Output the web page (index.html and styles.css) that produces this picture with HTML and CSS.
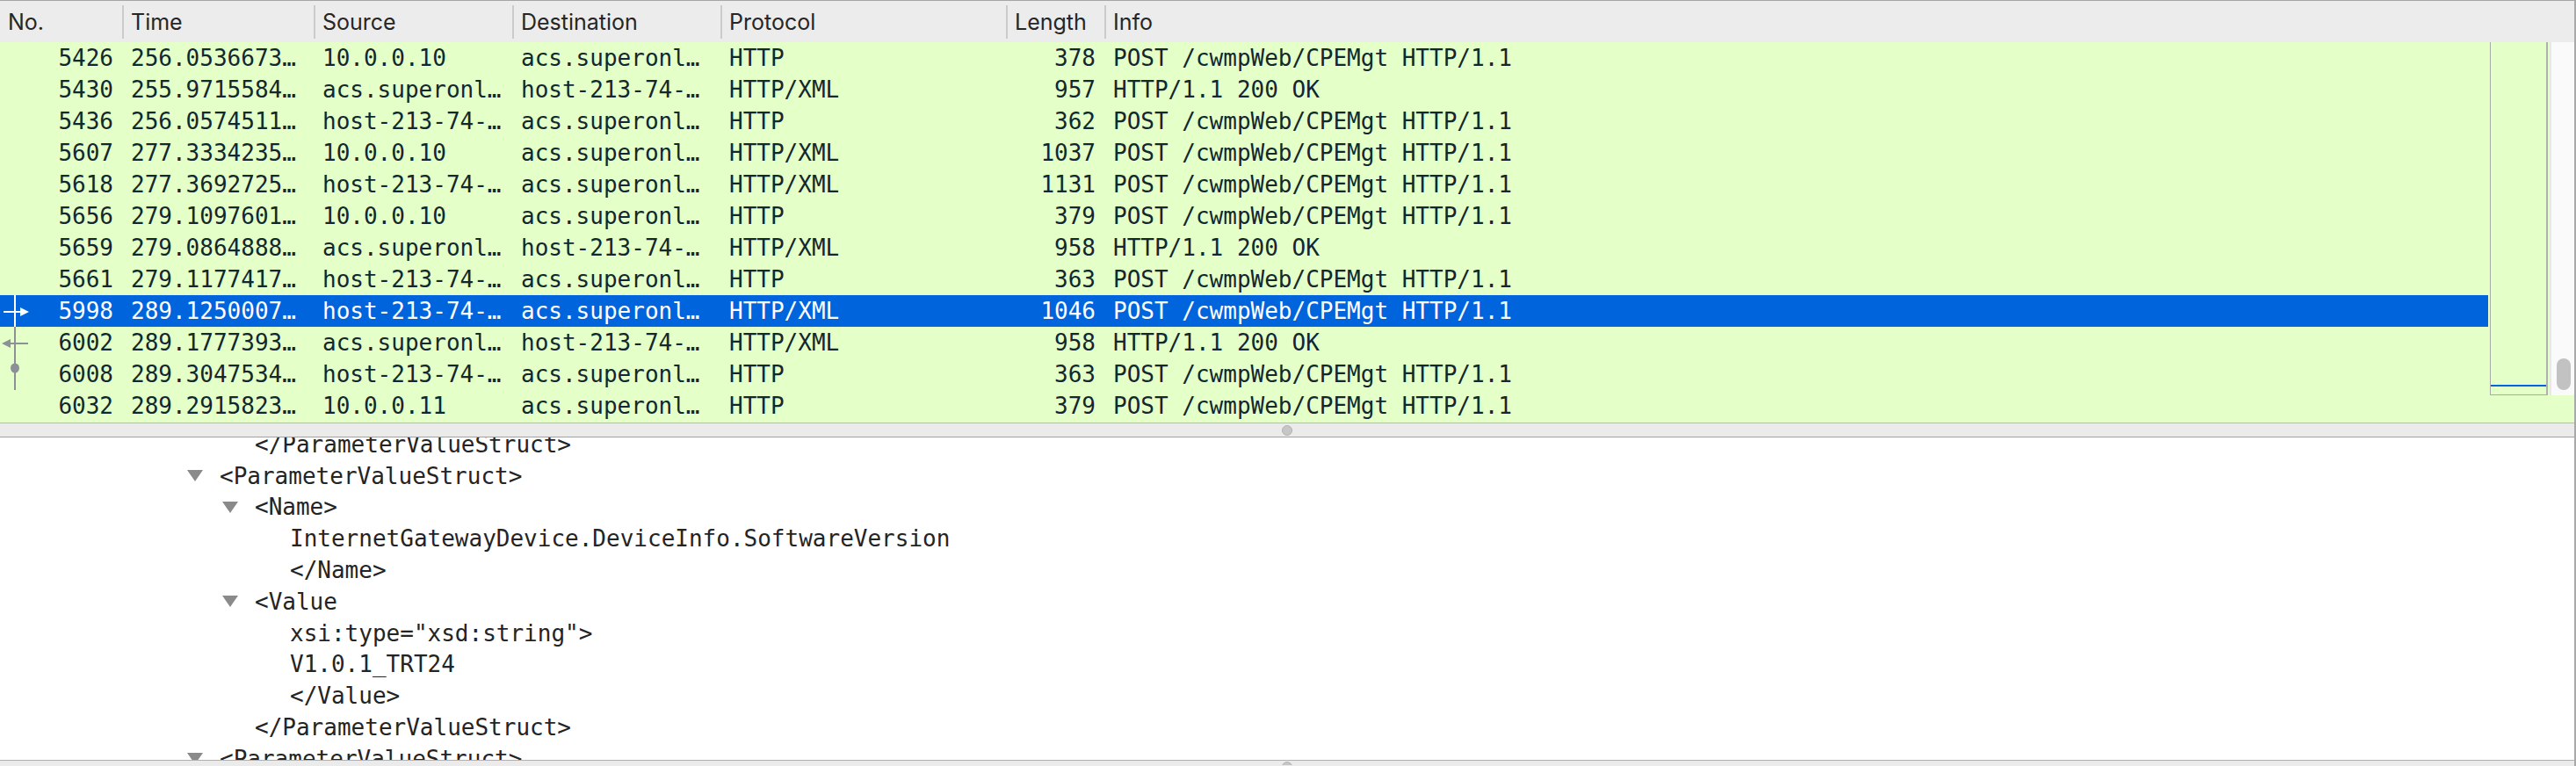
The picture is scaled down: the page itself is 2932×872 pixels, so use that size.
FILE: index.html
```html
<!DOCTYPE html>
<html>
<head>
<meta charset="utf-8">
<link rel="stylesheet" href="styles.css">
</head>
<body>
<div class="window">
  <div class="list">
    <div class="header">
      <div class="hcell first">No.</div>
      <div class="hcell">Time</div>
      <div class="hcell">Source</div>
      <div class="hcell">Destination</div>
      <div class="hcell">Protocol</div>
      <div class="hcell">Length</div>
      <div class="hcell">Info</div>
    </div>
    <div class="body">
      <div class="rows">
        <div class="row"><div class="cell no"><span class="num">5426</span></div><div class="cell">256.0536673…</div><div class="cell">10.0.0.10</div><div class="cell">acs.superonl…</div><div class="cell">HTTP</div><div class="cell len">378</div><div class="cell">POST /cwmpWeb/CPEMgt HTTP/1.1</div></div>
        <div class="row"><div class="cell no"><span class="num">5430</span></div><div class="cell">255.9715584…</div><div class="cell">acs.superonl…</div><div class="cell">host-213-74-…</div><div class="cell">HTTP/XML</div><div class="cell len">957</div><div class="cell">HTTP/1.1 200 OK</div></div>
        <div class="row"><div class="cell no"><span class="num">5436</span></div><div class="cell">256.0574511…</div><div class="cell">host-213-74-…</div><div class="cell">acs.superonl…</div><div class="cell">HTTP</div><div class="cell len">362</div><div class="cell">POST /cwmpWeb/CPEMgt HTTP/1.1</div></div>
        <div class="row"><div class="cell no"><span class="num">5607</span></div><div class="cell">277.3334235…</div><div class="cell">10.0.0.10</div><div class="cell">acs.superonl…</div><div class="cell">HTTP/XML</div><div class="cell len">1037</div><div class="cell">POST /cwmpWeb/CPEMgt HTTP/1.1</div></div>
        <div class="row"><div class="cell no"><span class="num">5618</span></div><div class="cell">277.3692725…</div><div class="cell">host-213-74-…</div><div class="cell">acs.superonl…</div><div class="cell">HTTP/XML</div><div class="cell len">1131</div><div class="cell">POST /cwmpWeb/CPEMgt HTTP/1.1</div></div>
        <div class="row"><div class="cell no"><span class="num">5656</span></div><div class="cell">279.1097601…</div><div class="cell">10.0.0.10</div><div class="cell">acs.superonl…</div><div class="cell">HTTP</div><div class="cell len">379</div><div class="cell">POST /cwmpWeb/CPEMgt HTTP/1.1</div></div>
        <div class="row"><div class="cell no"><span class="num">5659</span></div><div class="cell">279.0864888…</div><div class="cell">acs.superonl…</div><div class="cell">host-213-74-…</div><div class="cell">HTTP/XML</div><div class="cell len">958</div><div class="cell">HTTP/1.1 200 OK</div></div>
        <div class="row"><div class="cell no"><span class="num">5661</span></div><div class="cell">279.1177417…</div><div class="cell">host-213-74-…</div><div class="cell">acs.superonl…</div><div class="cell">HTTP</div><div class="cell len">363</div><div class="cell">POST /cwmpWeb/CPEMgt HTTP/1.1</div></div>
        <div class="row selected"><div class="cell no"><svg class="rel" width="40" height="36" viewBox="0 0 40 36"><line x1="17" y1="0" x2="17" y2="36" stroke="#ffffff" stroke-width="2"/><line x1="4" y1="19" x2="25" y2="19" stroke="#ffffff" stroke-width="2"/><polygon points="23,14 33,19 23,24" fill="#ffffff"/></svg><span class="num">5998</span></div><div class="cell">289.1250007…</div><div class="cell">host-213-74-…</div><div class="cell">acs.superonl…</div><div class="cell">HTTP/XML</div><div class="cell len">1046</div><div class="cell">POST /cwmpWeb/CPEMgt HTTP/1.1</div></div>
        <div class="row"><div class="cell no"><svg class="rel" width="40" height="36" viewBox="0 0 40 36"><line x1="17" y1="0" x2="17" y2="36" stroke="#8d9096" stroke-width="2"/><line x1="10" y1="19" x2="32" y2="19" stroke="#8d9096" stroke-width="2"/><polygon points="2,19 12,14 12,24" fill="#8d9096"/></svg><span class="num">6002</span></div><div class="cell">289.1777393…</div><div class="cell">acs.superonl…</div><div class="cell">host-213-74-…</div><div class="cell">HTTP/XML</div><div class="cell len">958</div><div class="cell">HTTP/1.1 200 OK</div></div>
        <div class="row"><div class="cell no"><svg class="rel" width="40" height="36" viewBox="0 0 40 36"><line x1="17" y1="0" x2="17" y2="36" stroke="#8d9096" stroke-width="2"/><ellipse cx="17" cy="11" rx="5" ry="5.5" fill="#8d9096"/></svg><span class="num">6008</span></div><div class="cell">289.3047534…</div><div class="cell">host-213-74-…</div><div class="cell">acs.superonl…</div><div class="cell">HTTP</div><div class="cell len">363</div><div class="cell">POST /cwmpWeb/CPEMgt HTTP/1.1</div></div>
        <div class="row"><div class="cell no"><span class="num">6032</span></div><div class="cell">289.2915823…</div><div class="cell">10.0.0.11</div><div class="cell">acs.superonl…</div><div class="cell">HTTP</div><div class="cell len">379</div><div class="cell">POST /cwmpWeb/CPEMgt HTTP/1.1</div></div>
      </div>
      <div class="minimap"><div class="mini-sel"></div></div>
      <div class="vscroll"><div class="thumb"></div></div>
    </div>
  </div>
  <div class="splitter"><span class="knob"></span></div>
  <div class="tree">
    <div class="tree-inner">
      <div class="tline l1"><span class="tog"></span><span>&lt;/ParameterValueStruct&gt;</span></div>
      <div class="tline l0"><span class="tog"><i class="tri"></i></span><span>&lt;ParameterValueStruct&gt;</span></div>
      <div class="tline l1"><span class="tog"><i class="tri"></i></span><span>&lt;Name&gt;</span></div>
      <div class="tline l2"><span class="tog"></span><span>InternetGatewayDevice.DeviceInfo.SoftwareVersion</span></div>
      <div class="tline l2"><span class="tog"></span><span>&lt;/Name&gt;</span></div>
      <div class="tline l1"><span class="tog"><i class="tri"></i></span><span>&lt;Value</span></div>
      <div class="tline l2"><span class="tog"></span><span>xsi:type="xsd:string"&gt;</span></div>
      <div class="tline l2"><span class="tog"></span><span>V1.0.1_TRT24</span></div>
      <div class="tline l2"><span class="tog"></span><span>&lt;/Value&gt;</span></div>
      <div class="tline l1"><span class="tog"></span><span>&lt;/ParameterValueStruct&gt;</span></div>
      <div class="tline l0"><span class="tog"><i class="tri"></i></span><span>&lt;ParameterValueStruct&gt;</span></div>
    </div>
  </div>
  <div class="splitter bottom"><span class="knob"></span></div>
</div>
</body>
</html>
```
FILE: styles.css
```css
* { box-sizing: border-box; }
html, body { margin: 0; padding: 0; }
body {
  width: 2932px;
  height: 872px;
  overflow: hidden;
  background: #ebebeb;
}
.window {
  width: 2932px;
  height: 872px;
  border-top: 1px solid #a5a5a5;
  border-right: 2px solid #a9a9a9;
  display: flex;
  flex-direction: column;
  overflow: hidden;
}
.header {
  height: 47px;
  background: #ececec;
  display: grid;
  grid-template-columns: 139px 218px 226px 237px 325px 112px 1fr;
  font-family: "Inter", "Roboto", "Liberation Sans", sans-serif;
  font-size: 25px;
  color: #262626;
}
.hcell {
  margin: 5px 0 4px;
  border-left: 2px solid #cbcbcb;
  padding-left: 8px;
  display: flex;
  align-items: center;
  white-space: nowrap;
  overflow: hidden;
}
.hcell.first { border-left: none; padding-left: 9px; }
.body {
  height: 434px;
  display: flex;
  align-items: flex-start;
  gap: 2px;
  background: #e4ffc7;
  border-bottom: 1px solid #b8b8b8;
}
.rows {
  width: 2832px;
  flex: none;
  font-family: "DejaVu Sans Mono", "Liberation Mono", monospace;
  font-size: 26px;
  color: #12272e;
}
.row {
  height: 36px;
  display: grid;
  grid-template-columns: 139px 218px 226px 237px 325px 112px 1fr;
  line-height: 36px;
  white-space: nowrap;
}
.row.selected {
  background: #0064dc;
  color: #ffffff;
}
.cell {
  padding: 0 10px;
  overflow: hidden;
}
.cell.len { text-align: right; }
.cell.no {
  display: flex;
  align-items: center;
  padding-left: 0;
}
.cell.no .num { margin-left: auto; }
.rel { display: block; flex: none; }
.minimap {
  width: 66px;
  height: 402px;
  flex: none;
  border-left: 1px solid #a9a9a9;
  border-right: 2px solid #b0b0b0;
  border-bottom: 1px solid #a9a9a9;
  background: #e4ffc7;
  display: flex;
  flex-direction: column;
  justify-content: flex-end;
}
.mini-sel {
  height: 2px;
  background: #0064dc;
  margin-bottom: 9px;
}
.vscroll {
  width: 30px;
  height: 402px;
  flex: none;
  background: #fafafa;
  border-left: 2px solid #e8e8e8;
  display: flex;
  flex-direction: column;
  justify-content: flex-end;
}
.thumb {
  width: 16px;
  height: 36px;
  margin: 0 0 6px 6px;
  border-radius: 8px;
  background: #c2c2c2;
}
.splitter {
  height: 16px;
  flex: none;
  background: #ebebeb;
  border-bottom: 1px solid #a2a2a2;
  display: flex;
  justify-content: center;
  align-items: center;
}
.knob {
  width: 12px;
  height: 12px;
  border-radius: 50%;
  background: #c6c6c6;
  border: 1px solid #b2b2b2;
}
.splitter.bottom {
  height: 5px;
  border-bottom: none;
  align-items: flex-start;
  overflow: hidden;
}
.splitter.bottom .knob { margin-top: 1px; flex: none; }
.tree {
  height: 368px;
  flex: none;
  background: #ffffff;
  border-bottom: 1px solid #b0b0b0;
  overflow: hidden;
  font-family: "DejaVu Sans Mono", "Liberation Mono", monospace;
  font-size: 26px;
  color: #242424;
}
.tree-inner { margin-top: -10px; }
.tline {
  height: 35.8px;
  display: flex;
  align-items: center;
  white-space: nowrap;
}
.tline.l0 { padding-left: 210px; }
.tline.l1 { padding-left: 250px; }
.tline.l2 { padding-left: 290px; }
.tog {
  width: 40px;
  flex: none;
  display: flex;
  align-items: center;
  padding-left: 3px;
}
.tri {
  display: block;
  width: 0;
  height: 0;
  border-left: 9px solid transparent;
  border-right: 9px solid transparent;
  border-top: 13px solid #8a8a8a;
}
```
